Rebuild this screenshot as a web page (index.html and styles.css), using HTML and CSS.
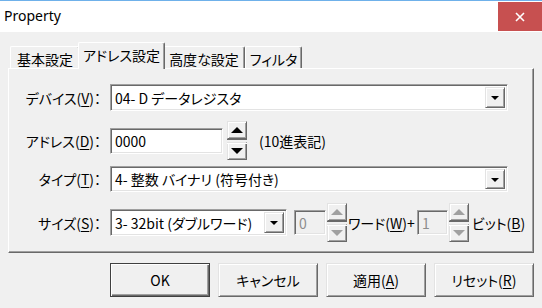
FILE: index.html
```html
<!DOCTYPE html>
<html lang="ja">
<head>
<meta charset="utf-8">
<title>Property</title>
<link rel="stylesheet" href="styles.css">
</head>
<body>
<div class="titlebar">
  <span class="title">Property</span>
  <div class="close"><svg width="10" height="10" viewBox="0 0 10 10"><path d="M1 1L9 9M9 1L1 9" stroke="#fff" stroke-width="1.6"/></svg></div>
</div>
<div class="client">
  <div class="tabs">
    <div class="tab t1">基本設定</div>
    <div class="tab t2 sel">アドレス設定</div>
    <div class="tab t3">高度な設定</div>
    <div class="tab t4">フィルタ</div>
  </div>
  <div class="panel">
    <div class="row r1">
      <div class="lbl">デバイス(<u>V</u>)：</div>
      <div class="combo wide"><span class="val">04- D データレジスタ</span><span class="drop"></span></div>
    </div>
    <div class="row r2">
      <div class="lbl">アドレス(<u>D</u>)：</div>
      <div class="edit addr">0000</div>
      <div class="spin"><span class="sb up"></span><span class="sb down"></span></div>
      <span class="note">(10進表記)</span>
    </div>
    <div class="row r3">
      <div class="lbl">タイプ(<u>T</u>)：</div>
      <div class="combo wide t"><span class="val">4- 整数 バイナリ (符号付き)</span><span class="drop"></span></div>
    </div>
    <div class="row r4">
      <div class="lbl">サイズ(<u>S</u>)：</div>
      <div class="combo small"><span class="val">3- 32bit (ダブルワード)</span><span class="drop"></span></div>
      <div class="edit dis e1">0</div>
      <div class="spin dspin"><span class="sb up"></span><span class="sb down"></span></div>
      <span class="unit u1">ワード(<u>W</u>)+</span>
      <div class="edit dis e2">1</div>
      <div class="spin dspin"><span class="sb up"></span><span class="sb down"></span></div>
      <span class="unit u2">ビット(<u>B</u>)</span>
    </div>
  </div>
  <div class="buttons">
    <div class="btn default">OK</div>
    <div class="btn">キャンセル</div>
    <div class="btn">適用(<u>A</u>)</div>
    <div class="btn">リセット(<u>R</u>)</div>
  </div>
</div>
</body>
</html>
```

FILE: styles.css
```css
* { box-sizing: border-box; }
html, body { margin: 0; padding: 0; }
body {
  width: 542px;
  height: 308px;
  overflow: hidden;
  background: #f0f0f0;
  color: #000;
  font-family: "Noto Sans CJK JP", sans-serif;
  font-size: 14px;
  font-feature-settings: "palt";
  line-height: 1;
}
u { text-decoration: underline; text-underline-offset: 2px; }

.titlebar {
  height: 32px;
  background: #fff;
  border-top: 1px solid #6fb1ea;
  display: flex;
  align-items: flex-start;
  justify-content: space-between;
}
.title {
  font-family: "Noto Sans", sans-serif;
  font-feature-settings: normal;
  font-size: 14px;
  line-height: 20px;
  padding-left: 4px;
  margin-top: 5px;
}
.close {
  width: 44px;
  height: 29px;
  margin-top: 1px;
  background: #c75050;
  display: flex;
  align-items: center;
  justify-content: center;
}

.client { padding: 0 8px; }

.tabs {
  display: flex;
  align-items: flex-end;
  height: 36px;
  padding-left: 2px;
  position: relative;
  z-index: 1;
}
.tab {
  height: 22px;
  display: flex;
  align-items: center;
  justify-content: center;
  padding-top: 2px;
  border-top: 1px solid #fff;
  border-left: 1px solid #fff;
  border-right: 1px solid #696969;
  box-shadow: inset -1px 0 #a0a0a0;
  border-radius: 2px 2px 0 0;
  background: #f0f0f0;
  line-height: 18px;
}
.t1 { width: 70px; }
.t2 { width: 83px; }
.t3 { width: 82px; }
.t4 { width: 57px; }
.tab.sel {
  width: 87px;
  height: 27px;
  margin: 0 -2px -1px;
  padding-top: 0;
  padding-bottom: 3px;
  position: relative;
  z-index: 2;
}

.panel {
  height: 185px;
  border-top: 1px solid #fff;
  border-left: 1px solid #fff;
  border-right: 1px solid #696969;
  border-bottom: 1px solid #696969;
  box-shadow: inset -1px -1px #a0a0a0;
  padding-top: 15px;
}

.row { display: flex; align-items: center; line-height: 20px; }
.r1 { height: 27px; }
.r2 { height: 39px; margin-top: 10px; }
.r3 { height: 26px; margin-top: 6px; }
.r4 { height: 39px; margin-top: 11px; }

.lbl {
  width: 92px;
  margin-right: 9px;
  text-align: right;
  white-space: nowrap;
}

.combo, .edit {
  border: 1px solid;
  border-color: #a0a0a0 #fff #fff #a0a0a0;
  box-shadow: inset 1px 1px #696969, inset -1px -1px #e3e3e3;
  background: #fff;
  display: flex;
  align-items: center;
  white-space: nowrap;
}
.combo { height: 27px; padding: 2px; }
.combo.t { height: 26px; }
.combo.wide { width: 398px; }
.combo.small { width: 177px; }
.val { flex: 1; min-width: 0; padding-left: 2px; line-height: 20px; }
.drop {
  flex: none;
  width: 20px;
  height: 100%;
  border: 1px solid;
  border-color: #e3e3e3 #696969 #696969 #e3e3e3;
  box-shadow: inset 1px 1px #fff, inset -1px -1px #a0a0a0;
  background: #f0f0f0;
  display: flex;
  align-items: center;
  justify-content: center;
}
.drop::after {
  content: "";
  border-left: 4px solid transparent;
  border-right: 4px solid transparent;
  border-top: 4px solid #000;
  margin-top: 1px;
}

.edit { height: 26px; padding-left: 4px; }
.addr { width: 113px; }
.edit.dis { background: #f0f0f0; color: #8d8d8d; height: 25px; }
.e1 { width: 32px; margin-left: 7px; }
.e2 { width: 31px; margin-left: 2px; }

.spin {
  width: 20px;
  height: 39px;
  margin-left: 4px;
  display: flex;
  flex-direction: column;
  justify-content: space-between;
  position: relative;
}
.spin::before {
  content: "";
  position: absolute;
  left: 0; right: 0;
  top: 18px;
  height: 3px;
  border-top: 1px solid #696969;
  border-bottom: 1px solid #fff;
}
.dspin { margin-left: 1px; }
.sb {
  height: 18px;
  border: 1px solid;
  border-color: #e3e3e3 #696969 #696969 #e3e3e3;
  box-shadow: inset 1px 1px #fff, inset -1px -1px #a0a0a0;
  background: #f0f0f0;
  display: flex;
  align-items: center;
  justify-content: center;
}
.sb.up::after {
  content: "";
  border-left: 6px solid transparent;
  border-right: 6px solid transparent;
  border-bottom: 6px solid #000;
}
.sb.down::after {
  content: "";
  border-left: 6px solid transparent;
  border-right: 6px solid transparent;
  border-top: 6px solid #000;
}
.dspin .sb.up::after { border-bottom-color: #a0a0a0; }
.dspin .sb.down::after { border-top-color: #a0a0a0; }

.note { margin-left: 12px; }
.unit { white-space: nowrap; }
.u1 { margin-left: 1px; }
.u2 { margin-left: 3px; }

.buttons {
  display: flex;
  gap: 8px;
  padding-left: 102px;
  margin-top: 10px;
  line-height: 20px;
}
.btn {
  width: 100px;
  height: 34px;
  border: 1px solid;
  border-color: #e3e3e3 #696969 #696969 #e3e3e3;
  box-shadow: inset 1px 1px #fff, inset -1px -1px #a0a0a0;
  background: #f0f0f0;
  display: flex;
  align-items: center;
  justify-content: center;
  white-space: nowrap;
}
.btn.default {
  border: 1px solid #404040;
  box-shadow: inset 1px 1px #fff, inset -1px -1px #696969, inset -2px -2px #a0a0a0;
}
```
